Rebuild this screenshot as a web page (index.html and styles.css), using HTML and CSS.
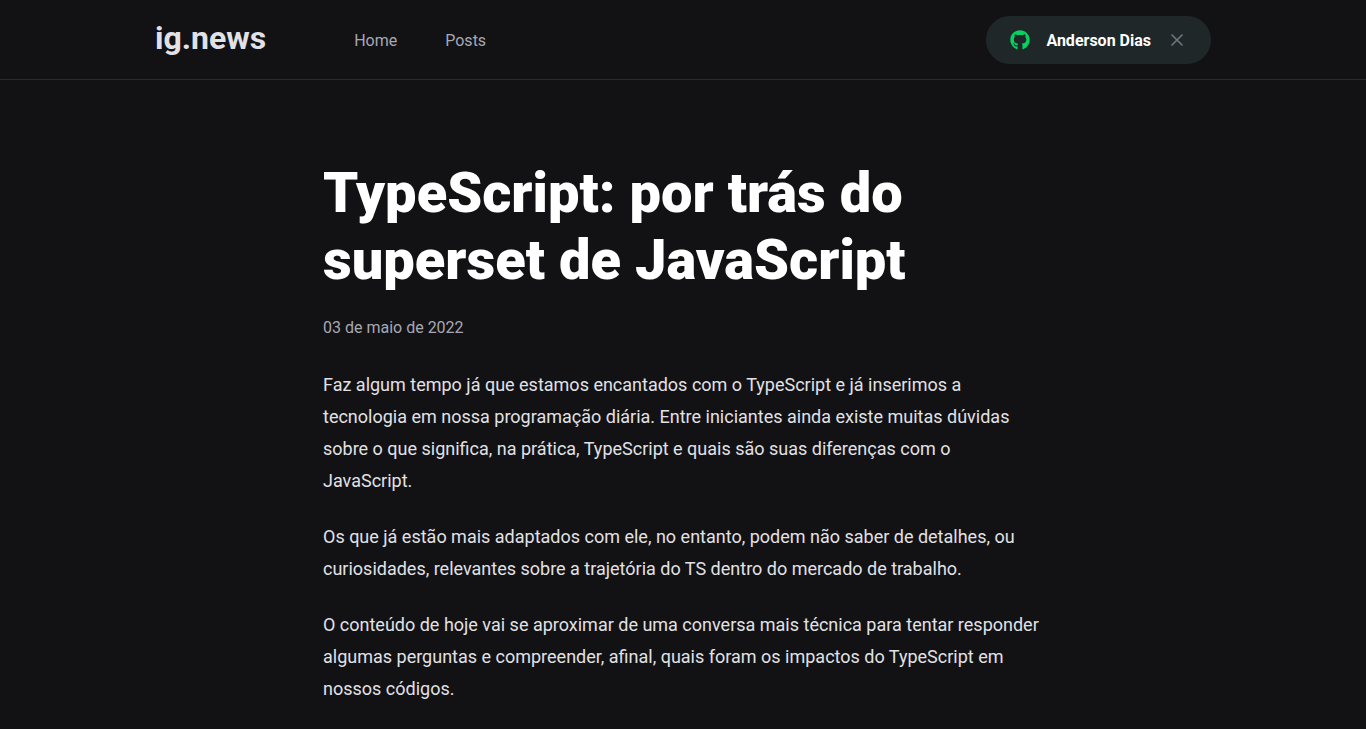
FILE: index.html
```html
<!DOCTYPE html>
<html lang="pt-BR">
<head>
<meta charset="utf-8">
<title>TypeScript: por trás do superset de JavaScript | ig.news</title>
<link rel="stylesheet" href="styles.css">
</head>
<body>
<header class="header">
  <div class="header-content">
    <a class="logo" href="#">ig.news</a>
    <nav class="nav">
      <a href="#">Home</a>
      <a href="#">Posts</a>
    </nav>
    <button class="sign-in" type="button">
      <svg class="github" viewBox="0 0 496 512" aria-hidden="true"><path fill="#04d361" d="M165.900 397.400c0 2-2.300 3.600-5.200 3.600-3.300.3-5.600-1.300-5.600-3.600 0-2 2.300-3.600 5.200-3.600 3-.3 5.600 1.300 5.600 3.600zm-31.100-4.500c-.7 2 1.300 4.300 4.300 4.900 2.600 1 5.600 0 6.200-2s-1.300-4.300-4.300-5.200c-2.600-.7-5.500.3-6.200 2.300zm44.200-1.700c-2.900.7-4.900 2.600-4.600 4.900.3 2 2.900 3.300 5.900 2.600 2.900-.7 4.900-2.600 4.600-4.600-.3-1.900-3-3.200-5.900-2.900zM244.800 8C106.100 8 0 113.300 0 252c0 110.900 69.800 205.800 169.500 239.200 12.800 2.300 17.300-5.600 17.300-12.100 0-6.200-.3-40.400-.3-61.400 0 0-70 15-84.700-29.800 0 0-11.400-29.100-27.800-36.600 0 0-22.900-15.700 1.600-15.400 0 0 24.900 2 38.600 25.800 21.900 38.600 58.600 27.500 72.900 20.900 2.300-16 8.800-27.100 16-33.700-55.900-6.200-112.300-14.300-112.300-110.500 0-27.500 7.600-41.300 23.600-58.900-2.600-6.500-11.100-33.300 2.600-67.900 20.900-6.500 69 27 69 27 20-5.600 41.500-8.500 62.800-8.500s42.800 2.900 62.800 8.500c0 0 48.100-33.600 69-27 13.700 34.700 5.200 61.400 2.600 67.900 16 17.700 25.800 31.500 25.800 58.900 0 96.500-58.900 104.200-114.800 110.500 9.200 7.900 17 22.900 17 46.400 0 33.700-.3 75.400-.3 83.600 0 6.500 4.600 14.400 17.300 12.100C428.200 457.800 496 362.900 496 252 496 113.300 383.500 8 244.800 8zM97.200 352.900c-1.300 1-1 3.300.7 5.200 1.600 1.600 3.900 2.300 5.200 1 1.300-1 1-3.300-.7-5.200-1.600-1.600-3.900-2.300-5.200-1zm-10.800-8.100c-.7 1.300.3 2.900 2.300 3.900 1.600 1 3.600.7 4.300-.7.7-1.300-.3-2.900-2.300-3.900-2-.6-3.600-.3-4.300.7zm32.400 35.600c-1.600 1.300-1 4.300 1.300 6.200 2.300 2.300 5.200 2.600 6.500 1 1.300-1.300.7-4.300-1.300-6.200-2.200-2.300-5.200-2.600-6.500-1zm-11.400-14.700c-1.600 1-1.600 3.600 0 5.900 1.600 2.300 4.300 3.300 5.600 2.300 1.600-1.300 1.600-3.900 0-6.200-1.400-2.300-4-3.300-5.600-2z"/></svg>
      Anderson Dias
      <svg class="close" viewBox="0 0 24 24" aria-hidden="true"><path d="M18 6 6 18M6 6l12 12" fill="none" stroke="#737380" stroke-width="2" stroke-linecap="round"/></svg>
    </button>
  </div>
</header>
<main class="container">
  <article class="post">
    <h1>TypeScript: por trás do superset de JavaScript</h1>
    <time datetime="2022-05-03">03 de maio de 2022</time>
    <div class="post-content">
      <p>Faz algum tempo já que estamos encantados com o TypeScript e já inserimos a tecnologia em nossa programação diária. Entre iniciantes ainda existe muitas dúvidas sobre o que significa, na prática, TypeScript e quais são suas diferenças com o JavaScript.</p>
      <p>Os que já estão mais adaptados com ele, no entanto, podem não saber de detalhes, ou curiosidades, relevantes sobre a trajetória do TS dentro do mercado de trabalho.</p>
      <p>O conteúdo de hoje vai se aproximar de uma conversa mais técnica para tentar responder algumas perguntas e compreender, afinal, quais foram os impactos do TypeScript em nossos códigos.</p>
    </div>
  </article>
</main>
</body>
</html>
```
FILE: styles.css
```css
* {
  margin: 0;
  padding: 0;
  box-sizing: border-box;
}

body {
  background: #121214;
  color: #fff;
  font: 400 16px Roboto, sans-serif;
}

.header {
  border-bottom: 1px solid #29292e;
}

.header-content {
  display: flex;
  align-items: center;
  max-width: 1120px;
  padding: 16px 32px 15px;
  margin: 0 auto;
}

.logo {
  padding-bottom: 4px;
  color: #e1e1e6;
  font-size: 32px;
  font-weight: 700;
  text-decoration: none;
}

.nav {
  display: flex;
  gap: 48px;
  margin-left: 88px;
}

.nav a {
  color: #a8a8b3;
  text-decoration: none;
}

.sign-in {
  display: flex;
  align-items: center;
  height: 48px;
  margin-left: auto;
  padding: 0 24px;
  border: 0;
  border-radius: 24px;
  background: #1f2729;
  color: #fff;
  font: 700 16px Roboto, sans-serif;
}

.github {
  width: 20px;
  height: 20px;
  margin-right: 16px;
}

.close {
  width: 20px;
  height: 20px;
  margin-left: 16px;
}

.container {
  max-width: 1120px;
  margin: 0 auto;
  padding: 0 32px;
}

.post {
  max-width: 720px;
  margin: 80px auto 0;
}

.post h1 {
  font-size: 56px;
  font-weight: 900;
  line-height: 67px;
}

.post time {
  display: block;
  margin-top: 24px;
  color: #a8a8b3;
  font-size: 16px;
}

.post-content {
  margin-top: 32px;
  color: #e1e1e6;
  font-size: 18px;
  line-height: 32px;
}

.post-content p {
  margin: 24px 0;
}
```
